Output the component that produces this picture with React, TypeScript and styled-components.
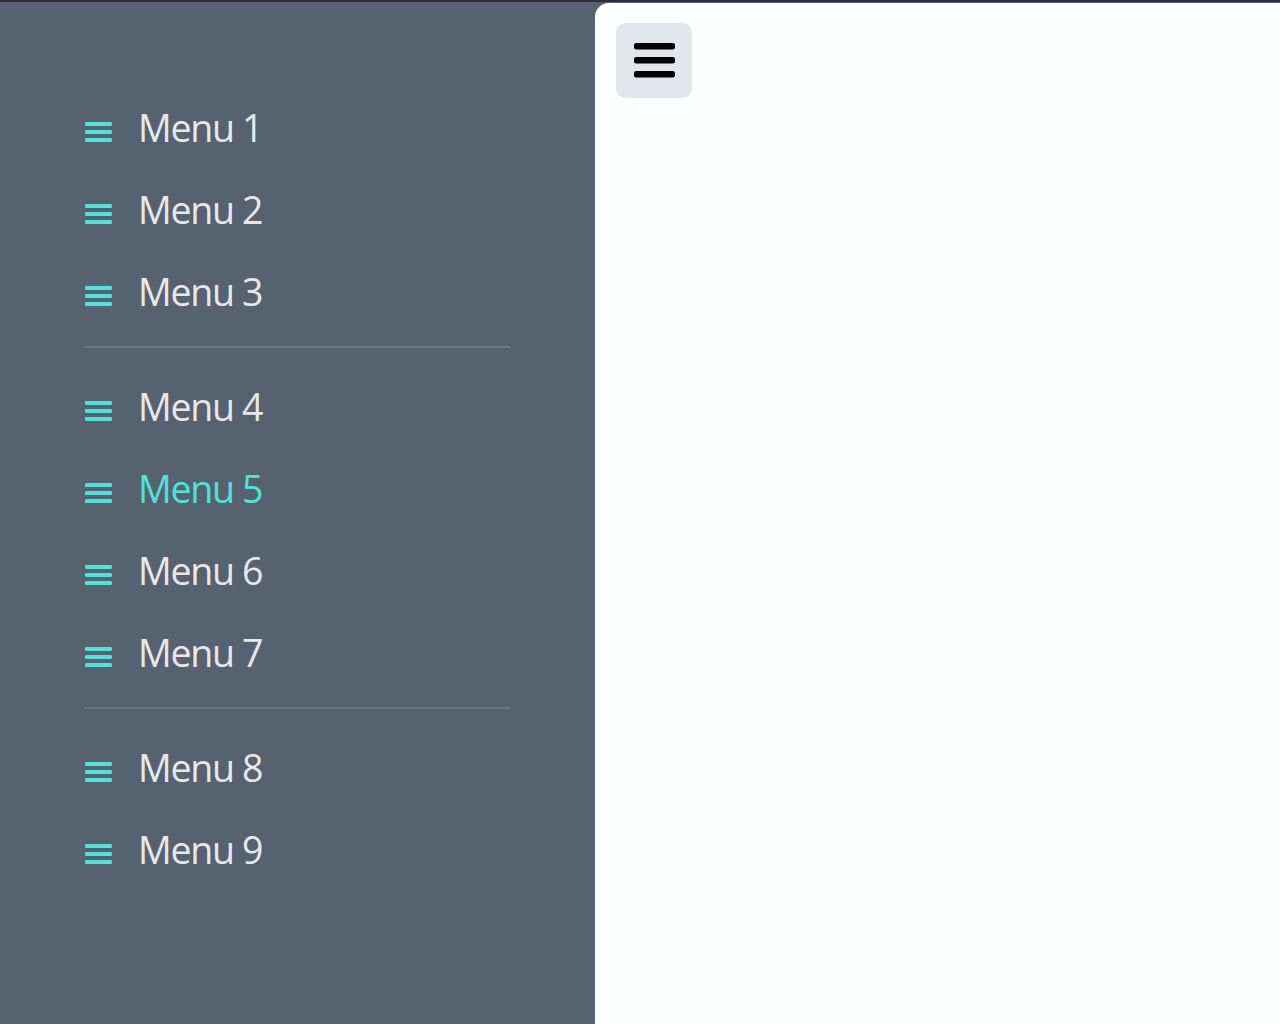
import React from "react";
import styled, { createGlobalStyle } from "styled-components";

const Global = createGlobalStyle`
  html, body { margin: 0; padding: 0; background: #1f2329; }
  body { font-family: "Open Sans", "Noto Sans", sans-serif; }
`;

const Page = styled.div`
  display: flex;
  height: 1024px;
  padding-top: 1px;
  box-sizing: border-box;
  background: #56626f;
  border-top: 2px solid #2a2f36;
`;

const Sidebar = styled.nav`
  width: 595px;
  flex-shrink: 0;
  box-sizing: border-box;
  padding: 102px 84px 0 84px;
  display: flex;
  flex-direction: column;
`;

const Group = styled.ul`
  list-style: none;
  margin: 0;
  padding: 0;
  display: flex;
  flex-direction: column;
  gap: 36px;
`;

const Divider = styled.hr`
  border: none;
  height: 2px;
  background: #6b7785;
  margin: 31px 0 36px 0;
  width: 427px;
`;

const Item = styled.li<{ $active?: boolean }>`
  display: flex;
  align-items: baseline;
  gap: 26px;
  height: 46px;
  line-height: 46px;
  padding-left: 1px;
  font-size: 37.5px;
  letter-spacing: -1.3px;
  color: ${(p) => (p.$active ? "#4fe3da" : "#e6e8ea")};
`;

const Main = styled.main`
  flex: 1;
  background: #fdfeff;
  border-top-left-radius: 14px;
  padding: 20px 21px;
`;

const ToggleButton = styled.button`
  width: 76px;
  height: 75px;
  border: none;
  border-radius: 9px;
  background: #e2e5ea;
  display: flex;
  align-items: center;
  justify-content: center;
  padding: 0;
`;

const BarsIcon = ({ color, w, h, t, gap }: { color: string; w: number; h: number; t: number; gap: number }) => (
  <svg width={w} height={h} viewBox={`0 0 ${w} ${h}`} style={{ flexShrink: 0 }}>
    {[0, 1, 2].map((i) => (
      <rect key={i} x={0} y={i * gap} width={w} height={t} rx={t / 3} fill={color} />
    ))}
  </svg>
);

const menus = [
  ["Menu 1", "Menu 2", "Menu 3"],
  ["Menu 4", "Menu 5", "Menu 6", "Menu 7"],
  ["Menu 8", "Menu 9"],
];

export default function App() {
  return (
    <>
      <Global />
      <Page>
        <Sidebar>
          {menus.map((group, gi) => (
            <React.Fragment key={gi}>
              {gi > 0 && <Divider />}
              <Group>
                {group.map((m) => (
                  <Item key={m} $active={m === "Menu 5"}>
                    <BarsIcon color="#4fe3da" w={27} h={20} t={4} gap={8} />
                    <span>{m}</span>
                  </Item>
                ))}
              </Group>
            </React.Fragment>
          ))}
        </Sidebar>
        <Main>
          <ToggleButton aria-label="toggle">
            <BarsIcon color="#000000" w={41} h={35} t={6.5} gap={14} />
          </ToggleButton>
        </Main>
      </Page>
    </>
  );
}
